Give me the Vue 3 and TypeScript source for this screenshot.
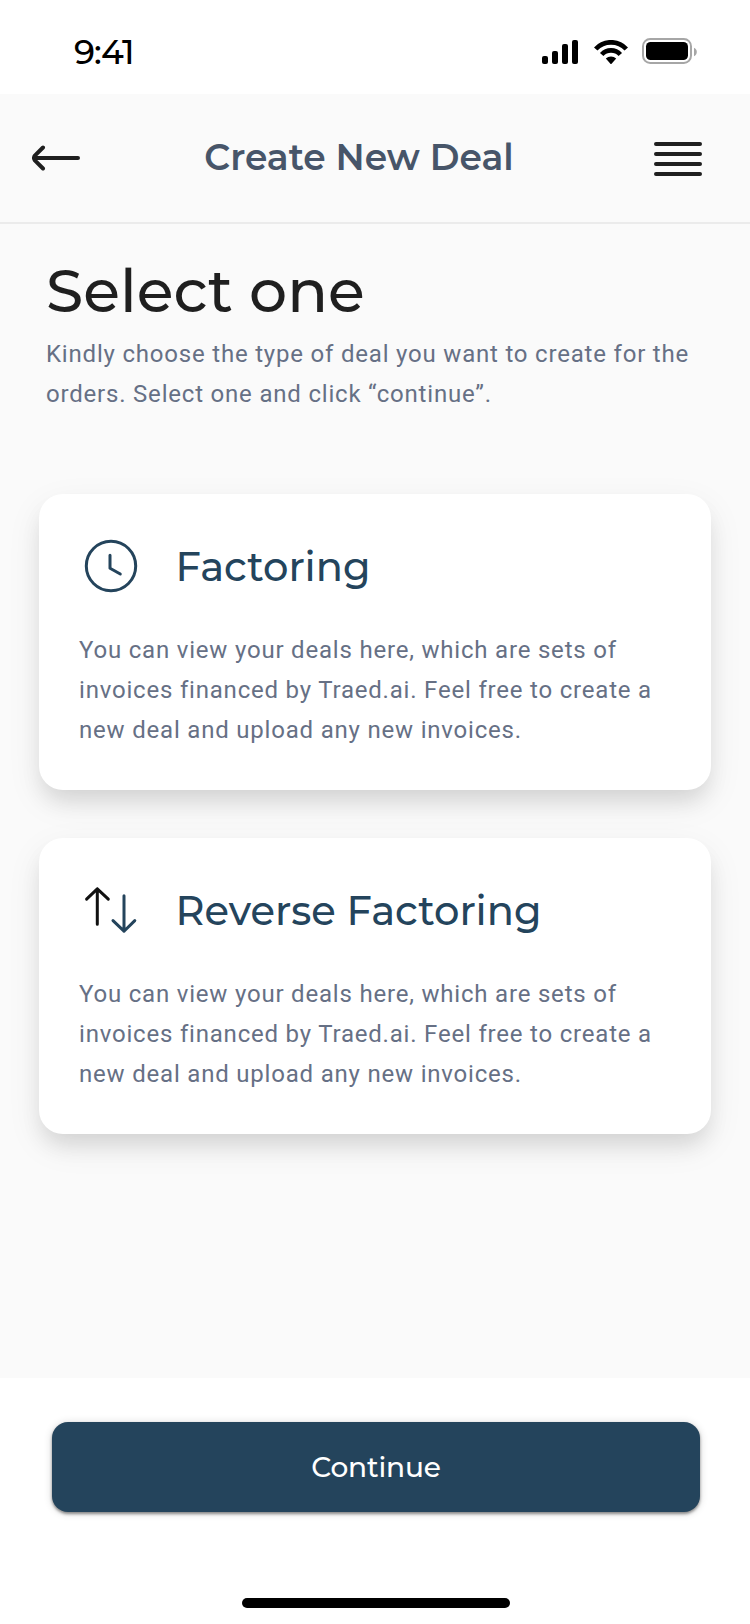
<script setup lang="ts">
interface DealType {
  id: 'factoring' | 'reverse'
  title: string
  description: string
}

const description =
  'You can view your deals here, which are sets of invoices financed by Traed.ai. Feel free to create a new deal and upload any new invoices.'

const dealTypes: DealType[] = [
  { id: 'factoring', title: 'Factoring', description },
  { id: 'reverse', title: 'Reverse Factoring', description },
]
</script>

<template>
  <div class="screen">
    <div class="status-bar">
      <span class="time">9:41</span>
      <div class="status-icons">
        <svg width="36" height="24" viewBox="0 0 36 24">
          <rect x="0" y="16" width="6" height="8" rx="2" />
          <rect x="10" y="11" width="6" height="13" rx="2" />
          <rect x="20" y="4" width="6" height="20" rx="2" />
          <rect x="30" y="0" width="6" height="24" rx="2" />
        </svg>
        <svg class="wifi" width="34" height="24" viewBox="0 0 34 24">
          <path class="arc" d="M1.7 9.04A20.7 20.7 0 0 1 32.3 9.04" />
          <path class="arc" d="M7.7 14.5A12.6 12.6 0 0 1 26.3 14.5" />
          <path d="M11.8 18.6A7.3 7.3 0 0 1 22.2 18.6L17.6 23.7Q17 24.2 16.4 23.7Z" />
        </svg>
        <svg class="battery" width="55" height="26" viewBox="0 0 55 26">
          <rect x="1" y="1" width="48" height="24" rx="7.2" fill="none" stroke="#a6a6a6" stroke-width="2" />
          <rect x="4" y="4" width="42" height="18" rx="4.6" />
          <path d="M52 9.8C53.8 10.6 54.8 12.1 54.8 14S53.8 17.4 52 18.2Z" fill="#a6a6a6" />
        </svg>
      </div>
    </div>

    <header class="header">
      <button class="icon-button" type="button" aria-label="Back">
        <svg width="48" height="28" viewBox="0 0 48 28">
          <path d="M46 14H2M11 3.500L3.100 11.400Q0.900 14 3.100 16.600L11 24.500" fill="none" stroke="#1f1f1f" stroke-width="4" stroke-linecap="round" stroke-linejoin="round" />
        </svg>
      </button>
      <h1 class="header-title">Create New Deal</h1>
      <button class="icon-button menu" type="button" aria-label="Menu">
        <svg width="48" height="34" viewBox="0 0 48 34">
          <path d="M2 2H46M2 12H46M2 22H46M2 32H46" fill="none" stroke="#1f1f1f" stroke-width="4" stroke-linecap="round" />
        </svg>
      </button>
    </header>

    <main class="content">
      <h2 class="heading">Select one</h2>
      <p class="intro">Kindly choose the type of deal you want to create for the orders. Select one and click “continue”.</p>

      <div class="cards">
        <article v-for="deal in dealTypes" :key="deal.id" class="card">
          <div class="card-head">
            <svg v-if="deal.id === 'factoring'" class="card-icon" width="64" height="64" viewBox="0 0 64 64">
              <circle cx="32" cy="32" r="24.7" />
              <path d="M31 21.200V34.200L41.300 40" />
            </svg>
            <svg v-else class="card-icon" width="64" height="64" viewBox="0 0 64 64">
              <path class="dark" d="M18.300 46.200V10.800M7.600 21.200L18.300 10.800L29.300 21.200" />
              <path d="M45 17.700V53.200M34 42.600L45 53.200L55.800 42.600" />
            </svg>
            <h3 class="card-title">{{ deal.title }}</h3>
          </div>
          <p class="card-text">{{ deal.description }}</p>
        </article>
      </div>
    </main>

    <footer class="footer">
      <button class="continue" type="button">Continue</button>
      <div class="home-indicator"></div>
    </footer>
  </div>
</template>

<style>
body {
  margin: 0;
  background: #fff;
}
</style>

<style scoped>
.screen {
  display: flex;
  flex-direction: column;
  width: 750px;
  height: 1624px;
  overflow: hidden;
  background: #fafafa;
  font-family: Roboto, 'Liberation Sans', sans-serif;
}

h1,
h2,
h3,
p {
  margin: 0;
}

button {
  border: 0;
  padding: 0;
  background: none;
}

svg {
  display: block;
}

.status-bar {
  display: flex;
  align-items: flex-start;
  justify-content: space-between;
  box-sizing: border-box;
  height: 94px;
  padding: 31px 53px 0 74px;
  background: #fff;
}

.time {
  font: 500 34px/42px Montserrat, Inter, sans-serif;
  letter-spacing: -0.9px;
  color: #000;
}

.status-icons {
  display: flex;
  padding-top: 7px;
}

.status-icons svg:not(.battery) {
  margin-top: 2px;
}

.wifi {
  margin: 0 14px 0 16px;
}

.arc {
  fill: none;
  stroke: #000;
  stroke-width: 4.7;
}

.header {
  display: flex;
  align-items: center;
  justify-content: space-between;
  box-sizing: border-box;
  height: 130px;
  padding: 0 48px 0 32px;
  border-bottom: 2px solid #ebebeb;
}

.header-title {
  padding: 0 16px 2px 0;
  font: 600 36px/44px Montserrat, Inter, sans-serif;
  color: #475569;
}

.menu {
  padding-top: 2px;
}

.content {
  flex: 1;
  padding: 30px 39px 0;
}

.heading {
  padding-left: 7px;
  font: 500 60px/74px Montserrat, Inter, sans-serif;
  color: #1f1f1f;
}

.intro {
  width: 665px;
  margin-top: 6px;
  padding-left: 7px;
}

.intro,
.card-text {
  font-size: 24px;
  line-height: 40px;
  letter-spacing: 0.8px;
  color: #667085;
}

.cards {
  display: flex;
  flex-direction: column;
  gap: 48px;
  margin-top: 80px;
}

.card {
  box-sizing: border-box;
  height: 296px;
  padding: 40px;
  border-radius: 24px;
  background: #fff;
  box-shadow:
    0 14px 22px -4px rgba(0, 0, 0, 0.11),
    0 12px 36px rgba(0, 0, 0, 0.07);
}

.card-head {
  display: flex;
  align-items: center;
  gap: 32.5px;
  margin-bottom: 32px;
}

.card-icon {
  fill: none;
  stroke: #24445c;
  stroke-width: 3;
  stroke-linecap: round;
  stroke-linejoin: round;
}

.card-icon .dark {
  stroke: #111;
}

.card-title {
  font: 500 40px/49px Montserrat, Inter, sans-serif;
  color: #24445c;
}

.footer {
  display: flex;
  flex-direction: column;
  align-items: center;
  box-sizing: border-box;
  height: 246px;
  padding: 44px 50px 16px 52px;
  background: #fff;
}

.continue {
  width: 648px;
  height: 90px;
  border-radius: 16px;
  background: #24445c;
  box-shadow:
    0 2px 3px rgba(0, 0, 0, 0.42),
    0 1px 8px rgba(0, 0, 0, 0.16);
  font: 500 28px/36px Montserrat, Inter, sans-serif;
  letter-spacing: -0.16px;
  color: #fff;
}

.home-indicator {
  width: 268px;
  height: 10px;
  margin-top: auto;
  border-radius: 5px;
  background: #000;
}
</style>
